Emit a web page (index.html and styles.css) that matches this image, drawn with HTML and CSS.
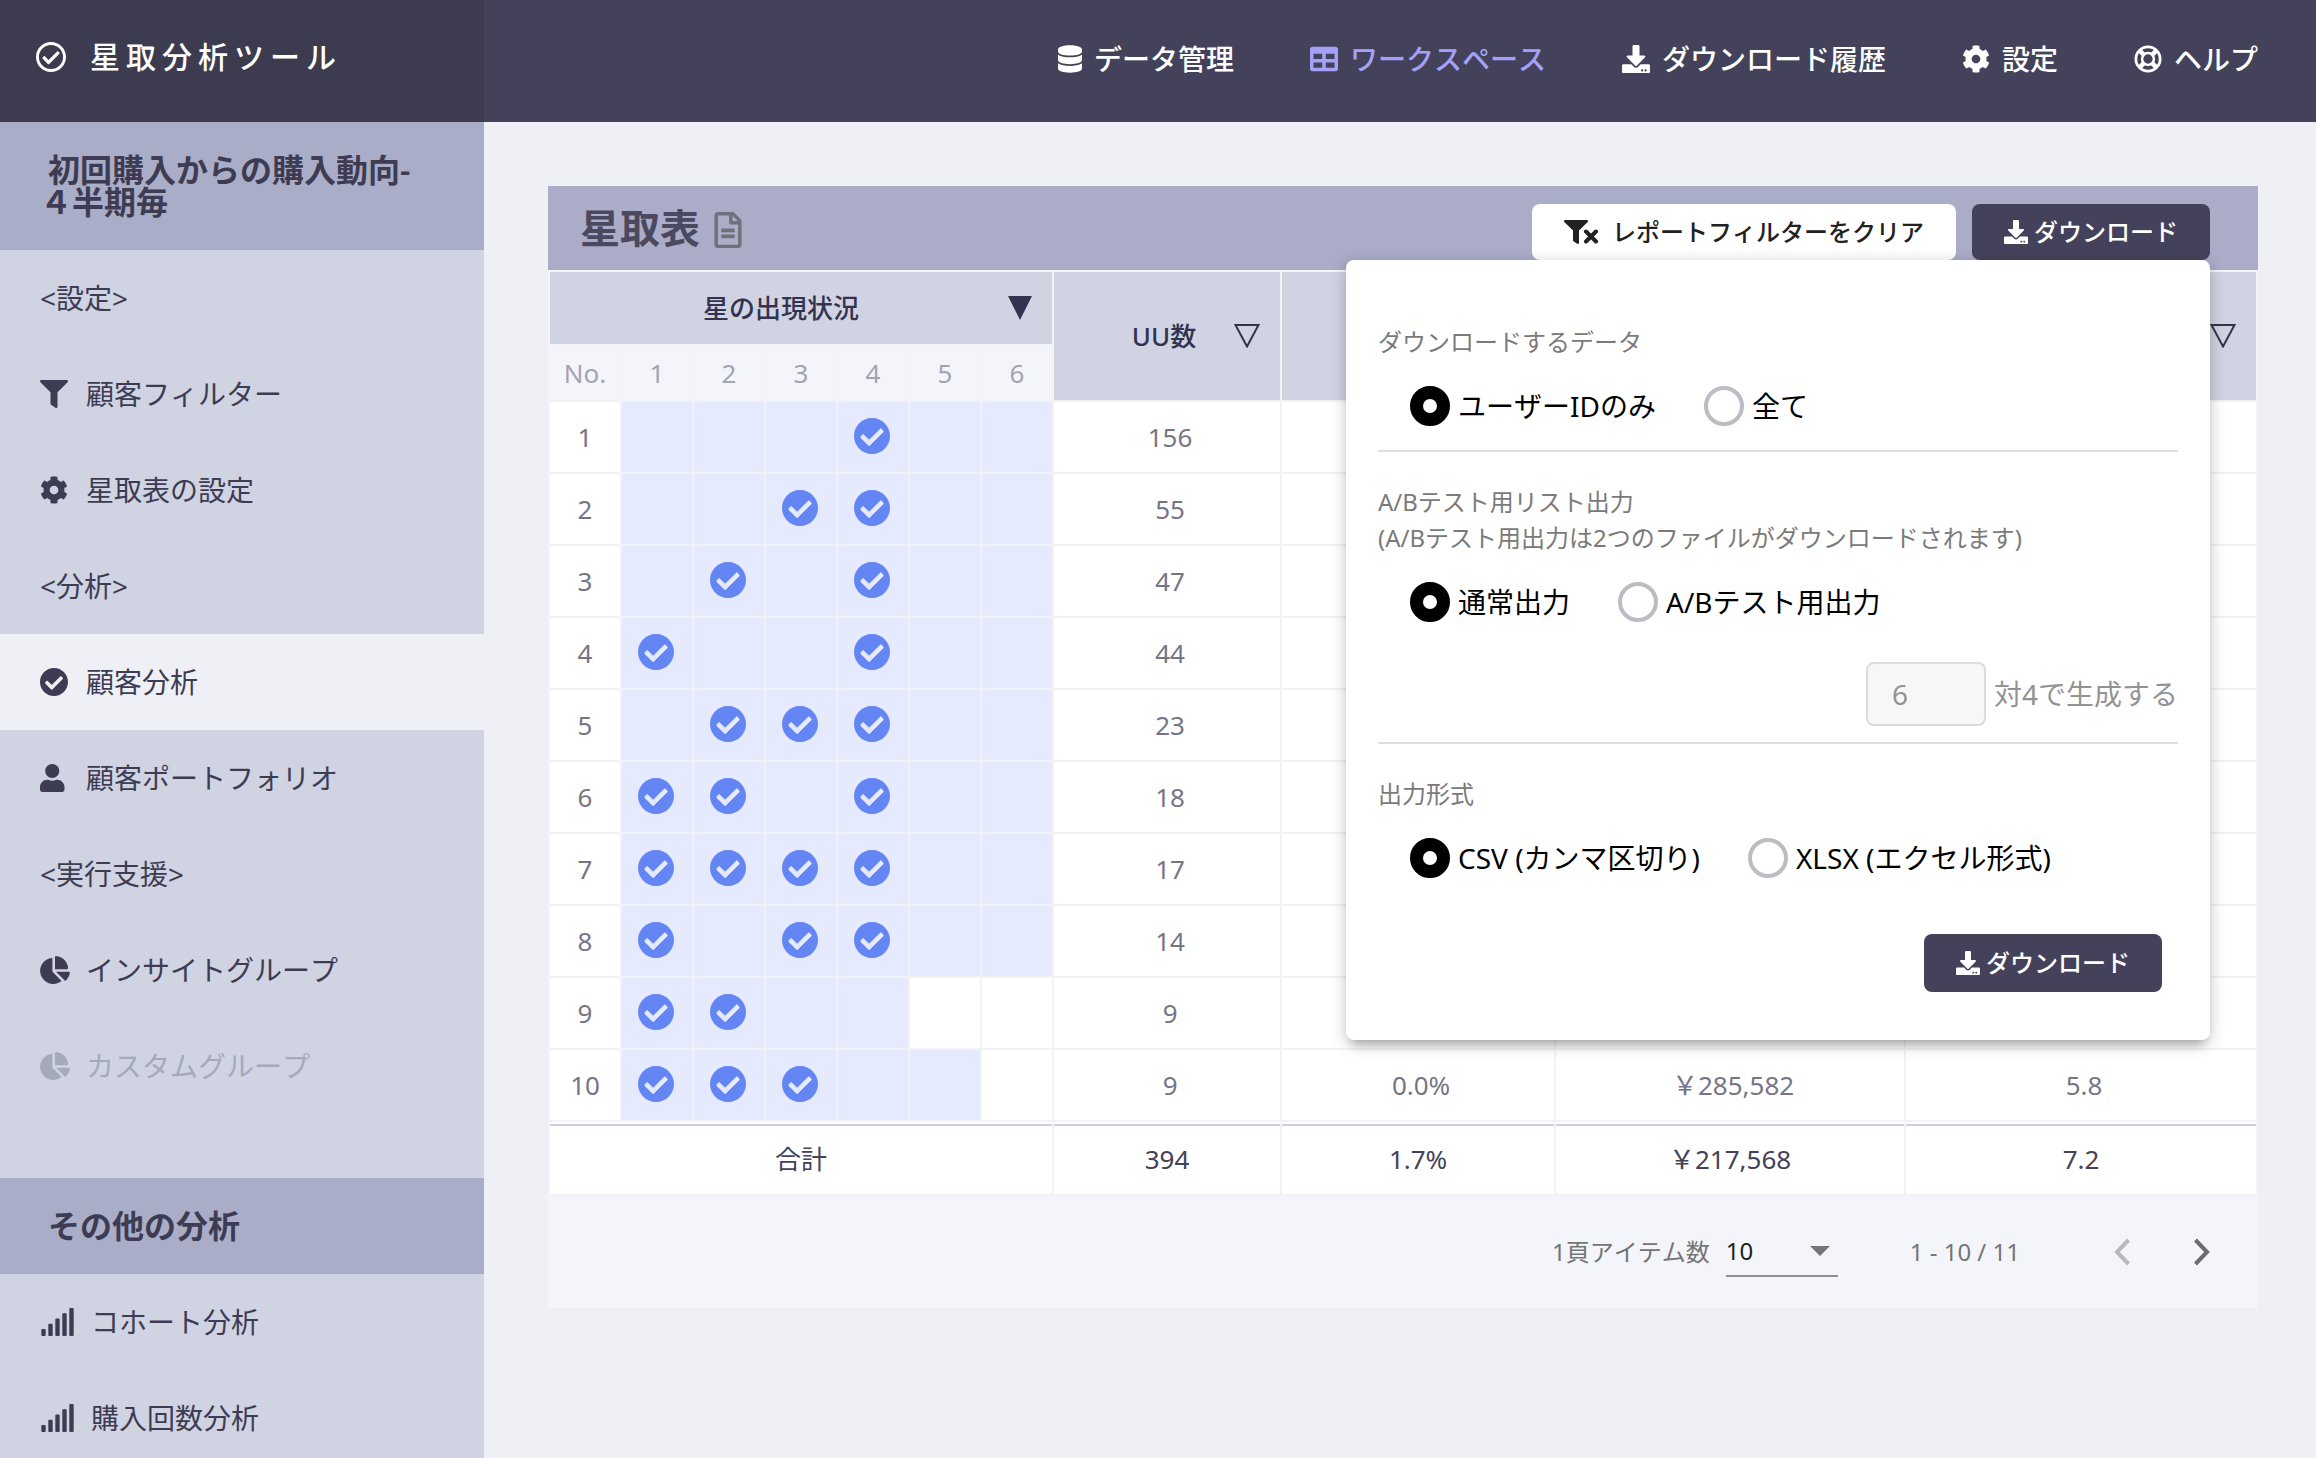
FILE: index.html
```html
<!DOCTYPE html>
<html lang="ja">
<head>
<meta charset="utf-8">
<meta name="viewport" content="width=device-width, initial-scale=1">
<title>星取分析ツール</title>
<link rel="stylesheet" href="styles.css">
</head>
<body>
<svg class="sprite" aria-hidden="true">
  <symbol id="i-check" viewBox="8 8 496 496"><path d="M504 256c0 136.967-111.033 248-248 248S8 392.967 8 256 119.033 8 256 8s248 111.033 248 248zM227.314 387.314l184-184c6.248-6.248 6.248-16.379 0-22.627l-22.627-22.627c-6.248-6.249-16.379-6.249-22.628 0L216 308.118l-70.059-70.059c-6.248-6.248-16.379-6.248-22.628 0l-22.627 22.627c-6.248 6.248-6.248 16.379 0 22.627l104 104c6.249 6.249 16.379 6.249 22.628.001z"/></symbol>
  <symbol id="i-check-o" viewBox="8 8 496 496"><path d="M256 8C119.033 8 8 119.033 8 256s111.033 248 248 248 248-111.033 248-248S392.967 8 256 8zm0 48c110.532 0 200 89.451 200 200 0 110.532-89.451 200-200 200-110.532 0-200-89.451-200-200 0-110.532 89.451-200 200-200m140.204 130.267l-22.536-22.718c-4.667-4.705-12.265-4.736-16.97-.068L215.346 303.697l-59.792-60.277c-4.667-4.705-12.265-4.736-16.97-.069l-22.719 22.536c-4.705 4.667-4.736 12.265-.068 16.971l90.781 91.516c4.667 4.705 12.265 4.736 16.97.068l172.589-171.204c4.704-4.668 4.734-12.266.067-16.971z"/></symbol>
  <symbol id="i-filter" viewBox="0 0 512 512"><path d="M487.976 0H24.028C2.71 0-8.047 25.866 7.058 40.971L192 225.941V432c0 7.831 3.821 15.17 10.237 19.662l80 55.98C298.02 518.69 320 507.493 320 487.98V225.941l184.947-184.97C520.021 25.896 509.338 0 487.976 0z"/></symbol>
  <symbol id="i-filter-x" viewBox="0 0 36 24"><path transform="scale(.046875)" d="M487.976 0H24.028C2.71 0-8.047 25.866 7.058 40.971L192 225.941V432c0 7.831 3.821 15.17 10.237 19.662l80 55.98C298.02 518.69 320 507.493 320 487.98V225.941l184.947-184.97C520.021 25.896 509.338 0 487.976 0z"/><path d="M22 11.500l10 10M32 11.500l-10 10" fill="none" stroke="currentColor" stroke-width="4" stroke-linecap="round"/></symbol>
  <symbol id="i-cog" viewBox="0 0 512 512"><path d="M487.4 315.7l-42.6-24.6c4.3-23.2 4.3-47 0-70.2l42.6-24.6c4.900-2.800 7.100-8.600 5.500-14-11.100-35.600-30-67.800-54.700-94.600-3.800-4.100-10-5.100-14.800-2.300L380.800 110c-17.900-15.400-38.500-27.300-60.800-35.100V25.800c0-5.600-3.900-10.500-9.400-11.700-36.700-8.200-74.300-7.800-109.200 0-5.500 1.200-9.400 6.100-9.400 11.700V75c-22.200 7.900-42.800 19.800-60.800 35.100L88.700 85.500c-4.900-2.800-11-1.900-14.800 2.300-24.700 26.700-43.600 58.900-54.700 94.600-1.700 5.400.6 11.200 5.500 14L67.300 221c-4.300 23.200-4.300 47 0 70.200l-42.600 24.600c-4.900 2.800-7.100 8.600-5.500 14 11.100 35.600 30 67.800 54.700 94.600 3.800 4.100 10 5.100 14.800 2.300l42.600-24.600c17.900 15.400 38.500 27.300 60.800 35.100v49.200c0 5.600 3.900 10.500 9.400 11.700 36.700 8.200 74.300 7.800 109.200 0 5.500-1.200 9.400-6.100 9.400-11.700v-49.200c22.200-7.900 42.800-19.800 60.800-35.100l42.600 24.600c4.900 2.800 11 1.900 14.800-2.300 24.700-26.700 43.600-58.900 54.700-94.600 1.500-5.500-.7-11.300-5.600-14.100zM256 336c-44.100 0-80-35.900-80-80s35.900-80 80-80 80 35.900 80 80-35.900 80-80 80z"/></symbol>
  <symbol id="i-user" viewBox="0 0 512 512"><path d="M224 256c70.7 0 128-57.3 128-128S294.7 0 224 0 96 57.3 96 128s57.3 128 128 128zm89.6 32h-16.7c-22.2 10.2-46.9 16-72.9 16s-50.6-5.8-72.9-16h-16.7C60.2 288 0 348.2 0 422.4V464c0 26.500 21.500 48 48 48h352c26.500 0 48-21.500 48-48v-41.600c0-74.200-60.200-134.400-134.400-134.400z"/></symbol>
  <symbol id="i-pie" viewBox="0 0 544 512"><path d="M527.79 288H290.5l158.03 158.03c6.04 6.04 15.98 6.53 22.19.68 38.7-36.46 65.32-85.61 73.13-140.86 1.34-9.46-6.51-17.85-16.06-17.85zm-15.83-64.8C503.72 103.74 408.26 8.28 288.8.04 279.68-.59 272 7.1 272 16.24V240h223.77c9.14 0 16.82-7.68 16.19-16.8zM224 288V50.71c0-9.55-8.39-17.4-17.84-16.06C86.99 51.49-4.1 155.6.14 280.37 4.5 408.51 114.83 513.59 243.03 511.98c50.4-.63 96.97-16.87 135.26-44.03 7.9-5.6 8.42-17.23 1.57-24.08L224 288z"/></symbol>
  <symbol id="i-signal" viewBox="0 0 640 512"><path d="M216 288h-48c-8.84 0-16 7.16-16 16v192c0 8.84 7.16 16 16 16h48c8.84 0 16-7.16 16-16V304c0-8.84-7.16-16-16-16zM88 384H40c-8.84 0-16 7.16-16 16v96c0 8.84 7.16 16 16 16h48c8.84 0 16-7.16 16-16v-96c0-8.84-7.16-16-16-16zm256-192h-48c-8.84 0-16 7.16-16 16v288c0 8.84 7.16 16 16 16h48c8.84 0 16-7.16 16-16V208c0-8.84-7.16-16-16-16zm128-96h-48c-8.84 0-16 7.16-16 16v384c0 8.84 7.16 16 16 16h48c8.84 0 16-7.16 16-16V112c0-8.84-7.16-16-16-16zM600 0h-48c-8.84 0-16 7.16-16 16v480c0 8.84 7.16 16 16 16h48c8.84 0 16-7.16 16-16V16c0-8.84-7.16-16-16-16z"/></symbol>
  <symbol id="i-database" viewBox="0 0 448 512"><path d="M448 73.143v45.714C448 159.143 347.667 192 224 192S0 159.143 0 118.857V73.143C0 32.857 100.333 0 224 0s224 32.857 224 73.143zM448 176v102.857C448 319.143 347.667 352 224 352S0 319.143 0 278.857V176c48.125 33.143 136.208 48.572 224 48.572S399.874 209.143 448 176zm0 160v102.857C448 479.143 347.667 512 224 512S0 479.143 0 438.857V336c48.125 33.143 136.208 48.572 224 48.572S399.874 369.143 448 336z"/></symbol>
  <symbol id="i-table" viewBox="0 0 512 512"><path d="M464 32H48C21.49 32 0 53.49 0 80v352c0 26.51 21.49 48 48 48h416c26.51 0 48-21.49 48-48V80c0-26.51-21.49-48-48-48zM224 416H64v-96h160v96zm0-160H64v-96h160v96zm224 160H288v-96h160v96zm0-160H288v-96h160v96z"/></symbol>
  <symbol id="i-download" viewBox="0 0 512 512"><path d="M216 0h80c13.3 0 24 10.7 24 24v168h87.7c17.8 0 26.7 21.5 14.1 34.1L269.7 378.3c-7.5 7.5-19.8 7.5-27.3 0L90.1 226.1c-12.6-12.6-3.7-34.1 14.1-34.1H192V24c0-13.3 10.7-24 24-24zm296 376v112c0 13.3-10.7 24-24 24H24c-13.3 0-24-10.7-24-24V376c0-13.3 10.7-24 24-24h146.7l49 49c20.1 20.1 52.5 20.1 72.6 0l49-49H488c13.3 0 24 10.7 24 24zm-124 88c0-11-9-20-20-20s-20 9-20 20 9 20 20 20 20-9 20-20zm64 0c0-11-9-20-20-20s-20 9-20 20 9 20 20 20 20-9 20-20z"/></symbol>
  <symbol id="i-ring" viewBox="0 0 512 512"><g fill="none" stroke="currentColor"><circle cx="256" cy="256" r="222" stroke-width="50"/><circle cx="256" cy="256" r="108" stroke-width="46"/><path d="M104 104l72 72M408 104l-72 72M104 408l72-72M408 408l-72-72" stroke-width="84"/></g></symbol>
  <symbol id="i-file" viewBox="0 0 384 512"><path d="M288 248v28c0 6.6-5.4 12-12 12H108c-6.6 0-12-5.4-12-12v-28c0-6.6 5.4-12 12-12h168c6.6 0 12 5.4 12 12zm-12 72H108c-6.6 0-12 5.4-12 12v28c0 6.6 5.4 12 12 12h168c6.6 0 12-5.4 12-12v-28c0-6.6-5.4-12-12-12zm108-188.1V464c0 26.5-21.5 48-48 48H48c-26.5 0-48-21.5-48-48V48C0 21.5 21.5 0 48 0h204.1C264.8 0 277 5.1 286 14.1L369.9 98c9 8.9 14.1 21.2 14.1 33.9zm-128-80V128h76.1L256 51.9zM336 464V176H232c-13.3 0-24-10.7-24-24V48H48v416h288z"/></symbol>
  <symbol id="i-down" viewBox="0 0 24 24"><path d="M0 0h24L12 24z"/></symbol>
  <symbol id="i-down-o" viewBox="0 0 26 24"><path d="M1.500 1h23L13 22.500z" fill="none" stroke="currentColor" stroke-width="2"/></symbol>
  <symbol id="i-caret" viewBox="0 0 20 10"><path d="M0 0h20L10 10z"/></symbol>
  <symbol id="i-prev" viewBox="0 0 18 28"><path d="M15.500 2L4 14l11.500 12" fill="none" stroke="currentColor" stroke-width="4"/></symbol>
  <symbol id="i-next" viewBox="0 0 18 28"><path d="M2.500 2L14 14 2.500 26" fill="none" stroke="currentColor" stroke-width="4"/></symbol>
</svg>

<div class="app">
  <header class="topbar">
    <a class="brand" href="#"><svg class="icon icon-brand"><use href="#i-check-o"/></svg>星取分析ツール</a>
    <nav class="topnav">
      <a href="#"><svg class="icon icon-narrow"><use href="#i-database"/></svg>データ管理</a>
      <a class="current" href="#"><svg class="icon"><use href="#i-table"/></svg>ワークスペース</a>
      <a href="#"><svg class="icon"><use href="#i-download"/></svg>ダウンロード履歴</a>
      <a href="#"><svg class="icon"><use href="#i-cog"/></svg>設定</a>
      <a href="#"><svg class="icon"><use href="#i-ring"/></svg>ヘルプ</a>
    </nav>
  </header>

  <div class="body">
    <aside class="sidebar">
      <h2 class="side-title">初回購入からの購入動向-<br>４半期毎</h2>
      <nav class="side-nav">
        <p class="side-item">&lt;設定&gt;</p>
        <a class="side-item" href="#"><span class="slot"><svg class="icon"><use href="#i-filter"/></svg></span>顧客フィルター</a>
        <a class="side-item" href="#"><span class="slot"><svg class="icon"><use href="#i-cog"/></svg></span>星取表の設定</a>
        <p class="side-item">&lt;分析&gt;</p>
        <a class="side-item active" href="#"><span class="slot"><svg class="icon"><use href="#i-check"/></svg></span>顧客分析</a>
        <a class="side-item" href="#"><span class="slot"><svg class="icon"><use href="#i-user"/></svg></span>顧客ポートフォリオ</a>
        <p class="side-item">&lt;実行支援&gt;</p>
        <a class="side-item" href="#"><span class="slot"><svg class="icon icon-pie"><use href="#i-pie"/></svg></span>インサイトグループ</a>
        <a class="side-item disabled" href="#" aria-disabled="true"><span class="slot"><svg class="icon icon-pie"><use href="#i-pie"/></svg></span>カスタムグループ</a>
      </nav>
      <h2 class="side-title">その他の分析</h2>
      <nav class="side-nav">
        <a class="side-item" href="#"><span class="slot"><svg class="icon icon-signal"><use href="#i-signal"/></svg></span>コホート分析</a>
        <a class="side-item" href="#"><span class="slot"><svg class="icon icon-signal"><use href="#i-signal"/></svg></span>購入回数分析</a>
      </nav>
    </aside>

    <main class="main">
      <section class="panel">
        <div class="panel-head">
          <h1>星取表</h1>
          <svg class="icon icon-file"><use href="#i-file"/></svg>
          <div class="actions">
            <button class="btn btn-light" type="button"><svg class="icon icon-clear"><use href="#i-filter-x"/></svg>レポートフィルターをクリア</button>
            <div class="dropdown">
              <button class="btn" type="button"><svg class="icon icon-btn"><use href="#i-download"/></svg>ダウンロード</button>
              <form class="popup">
                <fieldset>
                  <legend>ダウンロードするデータ</legend>
                  <div class="options">
                    <label><input type="radio" name="data" checked>ユーザーIDのみ</label>
                    <label><input type="radio" name="data">全て</label>
                  </div>
                </fieldset>
                <fieldset>
                  <legend>A/Bテスト用リスト出力<br>(A/Bテスト用出力は2つのファイルがダウンロードされます)</legend>
                  <div class="options">
                    <label><input type="radio" name="mode" checked>通常出力</label>
                    <label><input type="radio" name="mode">A/Bテスト用出力</label>
                  </div>
                  <div class="ratio">
                    <input id="ratio" type="text" value="6" disabled>
                    <label for="ratio">対4で生成する</label>
                  </div>
                </fieldset>
                <fieldset>
                  <legend>出力形式</legend>
                  <div class="options">
                    <label><input type="radio" name="format" checked>CSV (カンマ区切り)</label>
                    <label><input type="radio" name="format">XLSX (エクセル形式)</label>
                  </div>
                </fieldset>
                <button class="btn btn-submit" type="button"><svg class="icon icon-btn"><use href="#i-download"/></svg>ダウンロード</button>
              </form>
            </div>
          </div>
        </div>

        <table class="stars">
          <colgroup><col class="c-star" span="7"><col class="c-uu"><col class="c-rate"><col class="c-yen"><col></colgroup>
          <thead>
            <tr>
              <th colspan="7" class="h-main h-stars"><div class="sort"><span>星の出現状況</span><svg class="icon icon-sort"><use href="#i-down"/></svg></div></th>
              <th rowspan="2" class="h-main"><div class="sort"><span>UU数</span><svg class="icon icon-sort-o"><use href="#i-down-o"/></svg></div></th>
              <th rowspan="2" class="h-main"></th>
              <th rowspan="2" class="h-main"></th>
              <th rowspan="2" class="h-main"><div class="sort"><span></span><svg class="icon icon-sort-o"><use href="#i-down-o"/></svg></div></th>
            </tr>
            <tr class="h-sub"><th>No.</th><th>1</th><th>2</th><th>3</th><th>4</th><th>5</th><th>6</th></tr>
          </thead>
          <tbody>
            <tr><td>1</td><td class="on"></td><td class="on"></td><td class="on"></td><td class="on"><svg class="star"><use href="#i-check"/></svg></td><td class="on"></td><td class="on"></td><td class="num">156</td><td></td><td></td><td></td></tr>
            <tr><td>2</td><td class="on"></td><td class="on"></td><td class="on"><svg class="star"><use href="#i-check"/></svg></td><td class="on"><svg class="star"><use href="#i-check"/></svg></td><td class="on"></td><td class="on"></td><td class="num">55</td><td></td><td></td><td></td></tr>
            <tr><td>3</td><td class="on"></td><td class="on"><svg class="star"><use href="#i-check"/></svg></td><td class="on"></td><td class="on"><svg class="star"><use href="#i-check"/></svg></td><td class="on"></td><td class="on"></td><td class="num">47</td><td></td><td></td><td></td></tr>
            <tr><td>4</td><td class="on"><svg class="star"><use href="#i-check"/></svg></td><td class="on"></td><td class="on"></td><td class="on"><svg class="star"><use href="#i-check"/></svg></td><td class="on"></td><td class="on"></td><td class="num">44</td><td></td><td></td><td></td></tr>
            <tr><td>5</td><td class="on"></td><td class="on"><svg class="star"><use href="#i-check"/></svg></td><td class="on"><svg class="star"><use href="#i-check"/></svg></td><td class="on"><svg class="star"><use href="#i-check"/></svg></td><td class="on"></td><td class="on"></td><td class="num">23</td><td></td><td></td><td></td></tr>
            <tr><td>6</td><td class="on"><svg class="star"><use href="#i-check"/></svg></td><td class="on"><svg class="star"><use href="#i-check"/></svg></td><td class="on"></td><td class="on"><svg class="star"><use href="#i-check"/></svg></td><td class="on"></td><td class="on"></td><td class="num">18</td><td></td><td></td><td></td></tr>
            <tr><td>7</td><td class="on"><svg class="star"><use href="#i-check"/></svg></td><td class="on"><svg class="star"><use href="#i-check"/></svg></td><td class="on"><svg class="star"><use href="#i-check"/></svg></td><td class="on"><svg class="star"><use href="#i-check"/></svg></td><td class="on"></td><td class="on"></td><td class="num">17</td><td></td><td></td><td></td></tr>
            <tr><td>8</td><td class="on"><svg class="star"><use href="#i-check"/></svg></td><td class="on"></td><td class="on"><svg class="star"><use href="#i-check"/></svg></td><td class="on"><svg class="star"><use href="#i-check"/></svg></td><td class="on"></td><td class="on"></td><td class="num">14</td><td></td><td></td><td></td></tr>
            <tr><td>9</td><td class="on"><svg class="star"><use href="#i-check"/></svg></td><td class="on"><svg class="star"><use href="#i-check"/></svg></td><td class="on"></td><td class="on"></td><td></td><td></td><td class="num">9</td><td></td><td></td><td></td></tr>
            <tr><td>10</td><td class="on"><svg class="star"><use href="#i-check"/></svg></td><td class="on"><svg class="star"><use href="#i-check"/></svg></td><td class="on"><svg class="star"><use href="#i-check"/></svg></td><td class="on"></td><td class="on"></td><td></td><td class="num">9</td><td class="num">0.0%</td><td class="num">￥285,582</td><td class="num">5.8</td></tr>
          </tbody>
          <tfoot>
            <tr><td colspan="7">合計</td><td>394</td><td>1.7%</td><td>￥217,568</td><td>7.2</td></tr>
          </tfoot>
        </table>

        <div class="pager">
          <label for="per-page">1頁アイテム数</label>
          <span class="select"><select id="per-page"><option>10</option></select><svg class="icon icon-caret"><use href="#i-caret"/></svg></span>
          <span class="range">1 - 10 / 11</span>
          <button class="page-btn" type="button" aria-label="前へ" disabled><svg class="icon icon-page"><use href="#i-prev"/></svg></button>
          <button class="page-btn" type="button" aria-label="次へ"><svg class="icon icon-page"><use href="#i-next"/></svg></button>
        </div>
      </section>
    </main>
  </div>
</div>
</body>
</html>
```
FILE: styles.css
```css
:root {
  --ink: #3d3c52;
  --navy: #43425a;
  --lavender: #aaadc8;
  --mist: #d0d3e2;
  --paper: #eff0f6;
  --line: #f3f3f5;
}

* { box-sizing: border-box; }

body {
  margin: 0;
  background: var(--paper);
  color: var(--ink);
  font-family: "Noto Sans", "Noto Sans CJK JP", sans-serif;
  font-size: 28px;
  font-kerning: none;
  line-height: 36px;
}

h1, h2, p { margin: 0; }
a { color: inherit; text-decoration: none; }
button, input, select { font: inherit; color: inherit; }

.sprite { display: none; }
.icon { display: block; flex: none; width: 28px; height: 28px; fill: currentColor; }

.app { display: flex; flex-direction: column; height: 100vh; overflow: hidden; }

/* Top bar */
.topbar { display: flex; flex: none; height: 122px; background: var(--navy); color: #fff; font-weight: 500; }
.brand {
  display: flex;
  align-items: center;
  gap: 24px;
  width: 484px;
  padding: 0 36px 8px;
  background: #3c3b4f;
  font-size: 30px;
  letter-spacing: 6px;
}
.icon-brand { width: 30px; height: 30px; }
.topnav { display: flex; flex: 1; justify-content: flex-end; align-items: center; gap: 76px; padding: 0 58px 4px 0; }
.topnav a { display: flex; align-items: center; gap: 12px; white-space: nowrap; }
.topnav .current { color: #a3a2f8; }
.icon-narrow { width: 24px; }

.body { display: flex; flex: 1; min-height: 0; }

/* Sidebar */
.sidebar { flex: none; width: 484px; background: var(--mist); overflow: hidden; }
.side-title {
  padding: 32px 40px;
  background: var(--lavender);
  font-size: 32px;
  font-weight: 600;
  line-height: 32px;
  text-indent: 8px;
}
.side-nav + .side-title { margin-top: 64px; }
.side-item { display: flex; align-items: center; height: 96px; padding-left: 40px; }
.side-item.active { background: var(--paper); }
.side-item.disabled { color: #a5aaba; }
.slot { min-width: 30px; margin-right: 16px; }
.icon-pie { width: 30px; }
.icon-signal { width: 35px; }

/* Main panel */
.main { flex: 1; min-width: 0; padding: 64px 58px 64px 64px; }
.panel { background: #f4f5fa; }
.panel-head { display: flex; align-items: center; height: 84px; padding: 0 48px 0 32px; background: #aaacc8; }
.panel-head h1 { color: #4a495f; font-size: 40px; font-weight: 600; line-height: 48px; }
.icon-file { width: 28px; height: 36px; margin: 4px 0 0 14px; color: #6f7178; }
.actions { display: flex; gap: 16px; margin-left: auto; padding-top: 8px; }

.btn {
  display: flex;
  align-items: center;
  gap: 6px;
  height: 56px;
  padding: 0 32px;
  border: 0;
  border-radius: 8px;
  background: var(--navy);
  color: #fff;
  font-size: 24px;
  font-weight: 500;
  white-space: nowrap;
}
.btn-light { gap: 12px; background: #fff; color: #212121; }
.icon-btn { width: 24px; height: 24px; }
.icon-clear { width: 36px; height: 24px; }

/* Download popup */
.dropdown { position: relative; }
.popup {
  position: absolute;
  top: 100%;
  right: 0;
  z-index: 1;
  display: flex;
  flex-direction: column;
  width: 864px;
  padding: 32px 32px 48px;
  border-radius: 8px;
  background: #fff;
  color: #000;
  box-shadow: 0 10px 10px -6px rgba(0, 0, 0, .2), 0 4px 16px rgba(0, 0, 0, .24);
}
.popup fieldset { min-width: 0; margin: 0; padding: 32px 0 24px; border: 0; }
.popup fieldset + fieldset { border-top: 2px solid #dfdfdf; }
.popup fieldset:nth-of-type(2) { padding-bottom: 16px; }
.popup legend { float: left; width: 100%; padding: 0; color: #7a7a7a; font-size: 24px; }
.options { display: flex; clear: both; gap: 48px; padding: 26px 32px 0; }
.options label { display: flex; align-items: center; gap: 8px; height: 40px; white-space: nowrap; }
.options input {
  appearance: none;
  width: 40px;
  height: 40px;
  margin: 0;
  border: 4px solid #bcbcc4;
  border-radius: 50%;
  background: #fff;
}
.options input:checked { border: 13px solid #000; }
.ratio { display: flex; justify-content: flex-end; align-items: center; gap: 8px; margin-top: 40px; color: #939393; }
.ratio input { width: 120px; height: 64px; padding: 0 24px; border: 2px solid #dcdcdc; border-radius: 8px; background: #f7f7f7; }
.btn-submit { align-self: flex-end; height: 58px; margin: 32px 16px 0 0; }

/* Star table */
.stars { width: calc(100% - 2px); margin: 2px 0 0 2px; border-collapse: separate; border-spacing: 0; table-layout: fixed; font-size: 26px; }
.c-star { width: 72px; }
.c-uu { width: 228px; }
.c-rate { width: 274px; }
.c-yen { width: 350px; }
.stars th, .stars td { height: 72px; padding: 0; border: solid var(--line); border-width: 0 2px 2px 0; text-align: center; }
.stars th { font-weight: 500; }
.stars .h-main { height: 74px; background: var(--mist); color: #34334f; }
.stars .h-sub th { height: 56px; color: #a3a3b1; font-weight: 400; }
.sort { display: flex; align-items: center; padding: 0 20px 0 40px; }
.h-stars .sort { padding-left: 4px; }
.sort span { flex: 1; }
.icon-sort { width: 24px; height: 24px; }
.icon-sort-o { width: 26px; height: 24px; }
.stars tbody td { background: #fff; color: #767586; }
.stars tbody .on { padding: 0 2px 2px 0; background: #e6eaff; }
.stars tbody .num { padding-left: 6px; }
.star { display: block; width: 36px; height: 36px; margin: 0 auto; fill: #6486f5; }
.stars tfoot td {
  height: 74px;
  padding-top: 2px;
  background: linear-gradient(#fff 2px, #cdd0e0 2px, #cdd0e0 4px, #fff 4px);
  color: #43425a;
}

/* Pager */
.pager { display: flex; justify-content: flex-end; align-items: center; height: 112px; padding: 0 38px 0 0; color: #757575; font-size: 24px; }
.select { display: grid; align-items: center; width: 112px; margin: 0 72px 0 16px; border-bottom: 2px solid #8e8e94; color: #212121; }
.select > * { grid-area: 1 / 1; }
.select select { appearance: none; width: 100%; height: 48px; padding: 0; border: 0; background: none; }
.icon-caret { justify-self: end; width: 20px; height: 10px; margin-right: 8px; color: #757575; pointer-events: none; }
.range { margin-right: 84px; }
.page-btn { display: flex; justify-content: center; align-items: center; width: 36px; height: 56px; padding: 0; border: 0; background: none; color: #6c6c6e; }
.page-btn + .page-btn { margin-left: 44px; }
.page-btn:disabled { color: #b9b9bc; }
.icon-page { width: 18px; height: 28px; }
```
